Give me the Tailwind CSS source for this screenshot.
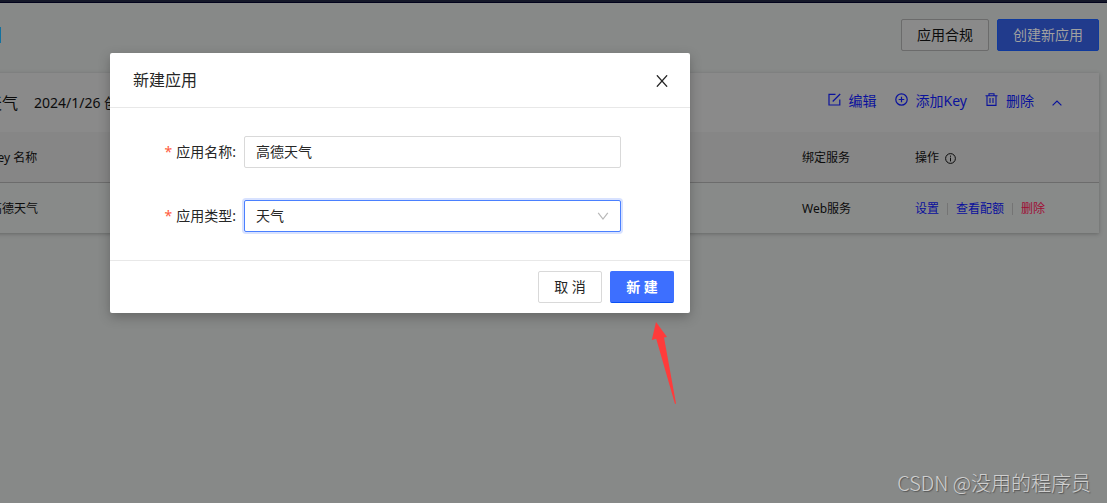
<!DOCTYPE html>
<html lang="zh-CN">
<head>
<meta charset="utf-8">
<title>应用管理</title>
<script src="https://cdn.jsdelivr.net/npm/@tailwindcss/browser@4"></script>
</head>
<body class="relative min-h-screen overflow-hidden bg-[#878988] font-['Noto_Sans','Noto_Sans_CJK_SC',sans-serif] text-sm text-[#0c0c0c]">
<div class="h-[3px] border-b border-[#02031c] bg-[#151829]"></div>
<main class="pr-2">
  <header class="flex items-center gap-2 pt-4">
    <span class="h-4 w-px bg-[#12719f]"></span>
    <button type="button" class="ml-auto h-8 w-[88px] rounded-xs border border-[#6b6b6b] bg-[#8a8a8a]">应用合规</button>
    <button type="button" class="h-8 w-[102px] rounded-xs border border-[#103a9c] bg-[#213b8c] text-[#a0a0a0]">创建新应用</button>
  </header>
  <section class="-ml-[26px] mt-[22px] bg-[#8a8a8a] shadow-[0_1px_4px_rgba(0,0,0,0.25)]">
    <div class="flex h-[59px] items-center pl-3 pr-[37px]">
      <h2 class="w-12 text-base">天气</h2>
      <span>2024/1/26 创建</span>
      <nav class="ml-auto flex items-center gap-[18px] pb-1 text-[#0a129c]">
        <a href="#" class="flex items-center gap-2">
          <svg class="mb-[2px] size-[13px]" viewBox="0 0 13 13" fill="none" stroke="currentColor" stroke-width="1.2"><path d="M7.500 1.300H1v10.700h10.800V6.500M4.700 8.500 12.200 1" /></svg>编辑</a>
        <a href="#" class="flex items-center gap-2">
          <svg class="mb-[2px] size-[13px]" viewBox="0 0 13 13" fill="none" stroke="currentColor" stroke-width="1.2"><circle cx="6.5" cy="6.5" r="5.7"/><path d="M6.5 3.7v5.6M3.7 6.5h5.6"/></svg>添加Key</a>
        <a href="#" class="flex items-center gap-2">
          <svg class="mb-[2px] size-[13px]" viewBox="0 0 13 13" fill="none" stroke="currentColor" stroke-width="1.1"><path d="M.5 2.8h12M4 2.8V.7h5v2.1M2 2.8v9.600h9V2.800M5 5v5M8 5v5"/></svg>删除</a>
        <button type="button" aria-label="收起" class="pt-1"><svg class="h-[6px] w-[10px]" viewBox="0 0 10 6" fill="none" stroke="currentColor" stroke-width="1.2"><path d="M.6 5.4 5 1l4.4 4.4"/></svg></button>
      </nav>
    </div>
    <table class="w-full table-fixed text-left text-xs">
      <colgroup><col><col class="w-[113px]"><col class="w-[200px]"></colgroup>
      <thead>
        <tr class="h-[50px] border-b border-[#6c6c6c] bg-[#868686]">
          <th class="px-4 pt-[3px] font-normal">Key 名称</th>
          <th class="px-4 pt-[3px] font-normal">绑定服务</th>
          <th class="px-4 pt-[3px] font-normal"><span class="flex items-center gap-[6px]">操作
            <svg class="size-[11px]" viewBox="0 0 11 11" fill="none" stroke="currentColor" stroke-width="1"><circle cx="5.5" cy="5.5" r="4.9"/><path d="M5.5 4.6v3.8M5.5 2.6v1.2"/></svg></span></th>
        </tr>
      </thead>
      <tbody>
        <tr class="h-[51px] bg-[#888a89]">
          <td class="px-4 pt-[3px]">高德天气</td>
          <td class="px-4 pt-[3px]">Web服务</td>
          <td class="px-4 pt-[3px]"><div class="flex items-center gap-2 text-[#0a109c]">
            <a href="#">设置</a><span class="h-3 w-px bg-[#747474]"></span><a href="#">查看配额</a><span class="h-3 w-px bg-[#747474]"></span><a href="#" class="text-[#a00c34]">删除</a></div></td>
        </tr>
      </tbody>
    </table>
  </section>
</main>

<div role="dialog" aria-labelledby="dialog-title" class="absolute left-[110px] top-[53px] w-[580px] rounded-xs bg-white text-[#262626] shadow-[0_4px_12px_rgba(0,0,0,0.25)]">
  <div class="flex h-[55px] items-center justify-between border-b border-[#e8e8e8] pl-[23px] pr-[22px]">
    <h1 id="dialog-title" class="text-base">新建应用</h1>
    <button type="button" aria-label="关闭" class="pt-px"><svg class="size-3" viewBox="0 0 12 12" fill="none" stroke="currentColor" stroke-width="1.3"><path d="M.9.3 11.100 11.700M11.100.3.9 11.700"/></svg></button>
  </div>
  <form>
    <div class="flex flex-col gap-8 py-7 pr-[69px]">
      <div class="flex items-center gap-2">
        <label for="app-name" class="flex w-[126px] justify-end gap-1"><span class="text-[#ff5c40]">*</span><span>应用名称:</span></label>
        <input id="app-name" type="text" value="高德天气" class="h-8 min-w-0 flex-1 rounded-xs border border-[#d9d9d9] px-[11px] pb-[2px] outline-none">
      </div>
      <div class="flex items-center gap-2">
        <label for="app-type" class="flex w-[126px] justify-end gap-1"><span class="text-[#ff5c40]">*</span><span>应用类型:</span></label>
        <div class="relative flex-1">
          <select id="app-type" class="block h-8 w-full appearance-none rounded-xs border border-[#4a80ff] bg-white px-[11px] shadow-[0_0_0_2px_#d8e2ff] outline-none"><option>天气</option></select>
          <svg class="pointer-events-none absolute right-3 top-3 h-2 w-3" viewBox="0 0 12 8" fill="none" stroke="#b8b8b8" stroke-width="1.2"><path d="M1.2.8 6 7 10.8.8"/></svg>
        </div>
      </div>
    </div>
    <div class="flex justify-end gap-2 border-t border-[#e8e8e8] px-4 py-[10px]">
      <button type="button" class="h-8 w-16 rounded-xs border border-[#d9d9d9] bg-white">取 消</button>
      <button type="button" class="h-8 w-16 rounded-xs border border-[#3d6fff] border-b-[#0a50f5] bg-[#3d6fff] font-bold text-white">新 建</button>
    </div>
  </form>
</div>

<svg class="absolute left-[651px] top-[321px] h-[84px] w-[27px]" viewBox="0 0 27 84" fill="#ff3b3b"><path d="M5 1 16 16l-3 .5L25 82.500l-1 .5L5.200 17.800.8 19z"/></svg>
<div class="absolute bottom-1 right-4 font-['Noto_Sans_CJK_SC',sans-serif] text-xl leading-8 font-light text-[#cfcfcf] [text-shadow:1px_1px_1px_#555]">CSDN @没用的程序员</div>
</body>
</html>
